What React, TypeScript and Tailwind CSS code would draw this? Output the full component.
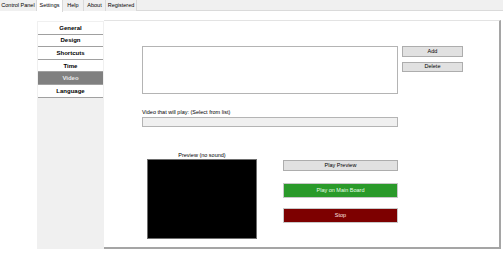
import React from "react";

const tabs = [
  { label: "Control Panel", w: "w-[37px]" },
  { label: "Settings", w: "w-[26px]", active: true },
  { label: "Help", w: "w-[21px]" },
  { label: "About", w: "w-[22px]" },
  { label: "Registered", w: "w-[31px]" },
];

const menu = ["General", "Design", "Shortcuts", "Time", "Video", "Language"];

export default function App() {
  return (
    <div
      className="w-[503px] h-[253px] bg-white overflow-hidden text-black"
      style={{ fontFamily: '"Liberation Sans", Arial, sans-serif' }}
    >
      {/* Tab strip */}
      <div className="flex h-[11px] bg-[#f0f0f0] border-b border-[#dadada]">
        {tabs.map((t) => (
          <div
            key={t.label}
            className={`${t.w} h-[11px] flex items-center justify-center text-[5.5px] leading-none border-r border-[#d9d9d9] ${
              t.active ? "bg-white h-[12px]" : "bg-[#f0f0f0]"
            }`}
          >
            {t.label}
          </div>
        ))}
      </div>

      {/* Body */}
      <div className="flex pl-[37px] pt-[9px]">
        {/* Sidebar */}
        <div className="w-[67px] h-[228px] mt-[1px] bg-[#f0f0f0] px-[1px] pt-[1px] flex flex-col">
          {menu.map((m) => (
            <div
              key={m}
              className={`h-[12.6px] box-border flex items-center justify-center text-[6px] font-bold leading-none border-b border-[#a0a0a0] ${
                m === "Video" ? "bg-[#808080] text-[#e8e8e8]" : "bg-white"
              }`}
            >
              {m}
            </div>
          ))}
        </div>

        {/* Content panel */}
        <div className="w-[397px] h-[229px] border-t border-t-[#e3e3e3] border-r-2 border-b-2 border-[#a5a5a5] bg-white pl-[38px] pt-[25px] box-border">
          <div className="flex">
            <div className="w-[256px] h-[48px] border border-[#b4b4b4] bg-white" />
            <div className="ml-[4px] flex flex-col gap-[5px]">
              <button className="w-[61px] h-[11px] bg-[#e1e1e1] border border-[#adadad] text-[5.5px] leading-none">
                Add
              </button>
              <button className="w-[61px] h-[10px] bg-[#e1e1e1] border border-[#adadad] text-[5.5px] leading-none">
                Delete
              </button>
            </div>
          </div>

          <div className="mt-[13px] h-[10px] text-[5.5px] leading-[10px]">
            Video that will play: (Select from list)
          </div>
          <div className="w-[256px] h-[10px] bg-[#f0f0f0] border border-[#b4b4b4]" />

          <div className="flex mt-[24px]">
            <div className="ml-[5px] w-[110px] flex flex-col">
              <div className="h-[8px] text-[5.5px] leading-[8px] text-center">
                Preview (no sound)
              </div>
              <div className="w-[110px] h-[80px] bg-black border border-[#6e6e6e]" />
            </div>
            <div className="ml-[26px] pt-[9px] flex flex-col">
              <button className="w-[115px] h-[11px] bg-[#e1e1e1] border border-[#adadad] text-[5.5px] leading-none">
                Play Preview
              </button>
              <button className="mt-[12px] w-[115px] h-[15px] bg-[#2a9a2a] border border-[#c8c8c8] text-[5.5px] leading-none text-[#e8ffe8]">
                Play on Main Board
              </button>
              <button className="mt-[10px] w-[115px] h-[15px] bg-[#7d0000] border border-[#c8c8c8] text-[5.5px] leading-none text-[#ffe0e0]">
                Stop
              </button>
            </div>
          </div>
        </div>
      </div>
    </div>
  );
}
